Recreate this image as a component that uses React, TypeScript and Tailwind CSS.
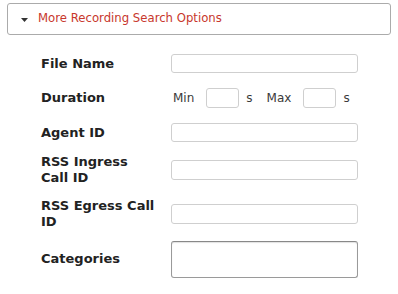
import React from "react";

const font = { fontFamily: '"DejaVu Sans", Verdana, sans-serif' };

function Row({ h, label, children }: { h: string; label: string; children: React.ReactNode }) {
  return (
    <div className={`flex items-center ${h}`}>
      <div className="w-[116px] mr-[14px] text-[13px] leading-[16px] font-bold text-[#222]">{label}</div>
      {children}
    </div>
  );
}

const inputCls = "w-[187px] h-[19px] border border-[#cfcfcf] rounded-[3px] bg-white";

export default function App() {
  return (
    <div className="w-[398px] h-[294px] bg-white px-[7px] pt-[3px]" style={font}>
      <div className="h-[32px] border border-[#ababab] rounded-[3px] flex items-center pl-[13px]">
        <svg width="7" height="4" viewBox="0 0 7 4" className="mr-[10px] mt-[1px]">
          <path d="M0 0 L7 0 L3.5 4 Z" fill="#333" />
        </svg>
        <span className="text-[11.7px] text-[#c8372d]">More Recording Search Options</span>
      </div>
      <div className="mt-[11px] pl-[34px]">
        <Row h="h-[35px]" label="File Name">
          <div className={inputCls} />
        </Row>
        <Row h="h-[34px]" label="Duration">
          <div className="flex items-center text-[12px] text-[#3a3a3a]">
            <span className="ml-[2px]">Min</span>
            <div className="ml-[12px] w-[33px] h-[20px] border border-[#cfcfcf] rounded-[3px]" />
            <span className="ml-[7px]">s</span>
            <span className="ml-[14px]">Max</span>
            <div className="ml-[12px] w-[33px] h-[20px] border border-[#cfcfcf] rounded-[3px]" />
            <span className="ml-[7px]">s</span>
          </div>
        </Row>
        <Row h="h-[35px]" label="Agent ID">
          <div className={inputCls} />
        </Row>
        <Row h="h-[40px]" label="RSS Ingress Call ID">
          <div className="w-[187px] h-[20px] border border-[#cfcfcf] rounded-[3px]" />
        </Row>
        <Row h="h-[48px]" label="RSS Egress Call ID">
          <div className="w-[187px] h-[20px] border border-[#cfcfcf] rounded-[3px]" />
        </Row>
        <Row h="h-[42px]" label="Categories">
          <div className="w-[187px] h-[37px] border border-[#9a9a9a] border-t-[#888] rounded-[3px] shadow-[inset_0_1px_1px_rgba(0,0,0,0.12)]" />
        </Row>
      </div>
    </div>
  );
}
